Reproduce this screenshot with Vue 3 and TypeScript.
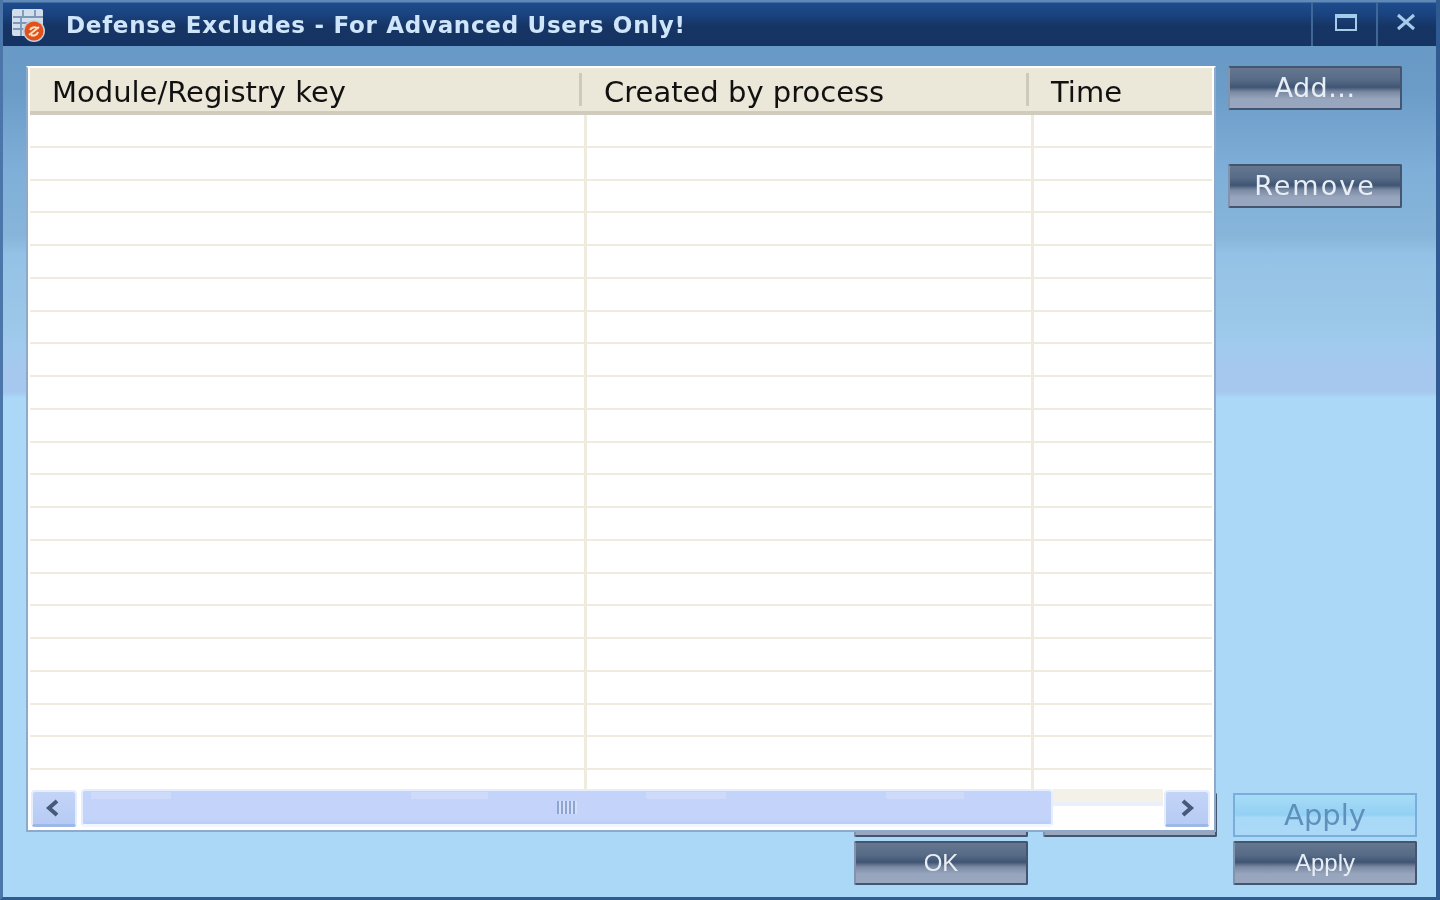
<template>
  <div class="window">
    <header class="titlebar">
      <svg class="app-icon" width="38" height="34" viewBox="0 0 38 34">
        <rect x="1" y="1" width="31" height="27" rx="2" fill="#d3deeb" />
        <path d="M2 9H32M2 15H20M2 21H14M12 2V9M24 2V9M10 9V28" stroke="#7d97b8" stroke-width="1.8" fill="none" />
        <circle cx="23" cy="23" r="11" fill="#c3cfdd" />
        <circle cx="23" cy="23" r="9.5" fill="#e4501a" />
        <path d="M18 27L28 19M19 22a5 5 0 0 1 7-2M27 24a5 5 0 0 1-7 3" stroke="#fbe3c8" stroke-width="2" fill="none" />
      </svg>
      <span class="title">Defense Excludes - For Advanced Users Only!</span>
      <div class="caption-btn max">
        <svg width="24" height="18" viewBox="0 0 24 18">
          <rect x="2" y="2" width="20" height="15" fill="none" stroke="#a5cdea" stroke-width="2" />
          <path d="M2 3.5H22" stroke="#a5cdea" stroke-width="3" />
        </svg>
      </div>
      <div class="caption-btn close">
        <svg width="22" height="18" viewBox="0 0 22 18">
          <path d="M3 2L19 16M19 2L3 16" stroke="#a5cdea" stroke-width="3" fill="none" />
        </svg>
      </div>
    </header>

    <main class="body">
      <section class="left">
        <button class="btn hidden-ok" />
        <button class="btn hidden-cancel" />
        <div class="panel">
          <div class="head">
            <div v-for="col in columns" :key="col" class="head-cell">{{ col }}</div>
          </div>
          <div class="rows">
            <div v-for="n in 21" :key="n" class="row">
              <div class="cell" />
              <div class="cell" />
              <div class="cell" />
            </div>
          </div>
          <div class="scrollbar">
            <div class="arrow prev">
              <svg width="16" height="18" viewBox="0 0 16 18"><path d="M12 2L4 9L12 16" fill="none" stroke="#47597a" stroke-width="4" /></svg>
            </div>
            <div class="thumb">
              <span class="grip" />
            </div>
            <div class="track" />
            <div class="arrow">
              <svg width="16" height="18" viewBox="0 0 16 18"><path d="M4 2L12 9L4 16" fill="none" stroke="#47597a" stroke-width="4" /></svg>
            </div>
          </div>
        </div>
        <div class="ok-row">
          <button class="btn primary">OK</button>
        </div>
      </section>

      <aside class="side">
        <button class="btn add">Add...</button>
        <button class="btn remove">Remove</button>
        <button class="btn ghost">Apply</button>
        <button class="btn primary apply">Apply</button>
      </aside>
    </main>
  </div>
</template>

<script setup lang="ts">
const columns: string[] = ['Module/Registry key', 'Created by process', 'Time'];
</script>

<style>
html,
body {
  margin: 0;
  overflow: hidden;
}
</style>

<style scoped>
.window {
  width: 1440px;
  height: 900px;
  box-sizing: border-box;
  display: flex;
  flex-direction: column;
  overflow: hidden;
  font-family: "DejaVu Sans", Verdana, sans-serif;
  filter: blur(0.5px);
  border-left: 3px solid #4a76aa;
  border-right: 4px solid #2f5b92;
  border-bottom: 3px solid #2f5a92;
  background: linear-gradient(180deg, #6597c4 0, #6b9cc8 90px, #7fafd8 170px, #87b5da 235px, #94c2e6 255px, #9bc7e8 320px, #a0cbee 345px, #a6c8ee 370px, #a6c8ee 392px, #abd8f7 398px, #abd8f7 100%);
}

.titlebar {
  height: 46px;
  flex: none;
  display: flex;
  align-items: center;
  box-sizing: border-box;
  padding: 3px 0 0 11px;
  margin: 0 -4px 0 -3px;
  background: linear-gradient(180deg, #5f8ab8 0, #5f8ab8 2px, #1f4c8d 3px, #1a4380 14px, #163565 26px, #153363 100%);
}

.app-icon {
  flex: none;
}

.title {
  flex: 1;
  margin-left: 17px;
  color: #cfe6fa;
  font-size: 23px;
  font-weight: 700;
  letter-spacing: 0.72px;
  white-space: nowrap;
}

.caption-btn {
  height: 43px;
  flex: none;
  display: flex;
  align-items: center;
  justify-content: center;
  padding-bottom: 6px;
  box-sizing: border-box;
  border-left: 2px solid #3f6797;
}

.max {
  width: 65px;
  padding-left: 2px;
}

.close {
  width: 64px;
  padding-right: 6px;
}

.body {
  flex: 1;
  min-height: 0;
  display: flex;
  padding: 20px 0 0 23px;
}

.left {
  position: relative;
  width: 1190px;
  flex: none;
  display: flex;
  flex-direction: column;
}

.panel {
  position: relative;
  height: 766px;
  box-sizing: border-box;
  display: flex;
  flex-direction: column;
  background: #fff;
  border: 2px solid #8fa9cb;
  border-top-color: #fff;
  padding: 0 2px 2px 2px;
  overflow: hidden;
}

.head {
  height: 47px;
  flex: none;
  box-sizing: border-box;
  display: grid;
  grid-template-columns: 552px 447px 1fr;
  align-items: center;
  background: #ebe8d9;
  border-bottom: 4px solid #cfccbd;
}

.head-cell {
  height: 33px;
  display: flex;
  align-items: center;
  padding: 5px 0 0 22px;
  font-size: 29px;
  color: #111;
  white-space: nowrap;
  border-right: 3px solid #cdcabb;
  box-sizing: border-box;
}

.head-cell:last-child {
  border-right: none;
}

.rows {
  flex: 1;
  min-height: 0;
  overflow: hidden;
}

.row {
  height: 32.75px;
  box-sizing: border-box;
  display: grid;
  grid-template-columns: 557px 447px 1fr;
  border-bottom: 2px solid #efecdf;
}

.cell {
  border-right: 3px solid #efecdf;
}

.cell:last-child {
  border-right: none;
}

.scrollbar {
  position: absolute;
  left: 2px;
  right: 0;
  bottom: 0;
  height: 41px;
  display: flex;
  align-items: stretch;
  padding: 0 3px 3px 0;
  box-sizing: border-box;
  background: #fff;
}

.arrow {
  width: 46px;
  flex: none;
  margin: 1px 1px 0;
  display: flex;
  align-items: center;
  justify-content: center;
  box-sizing: border-box;
  border: 2px solid #e6eefb;
  border-bottom: 3px solid #9db7e6;
  border-radius: 4px;
  background: linear-gradient(180deg, #c3d4f7, #b6cbf4);
}

.prev {
  padding-right: 3px;
}

.thumb {
  width: 972px;
  flex: none;
  margin: 0 0 0 3px;
  display: flex;
  align-items: center;
  justify-content: center;
  box-sizing: border-box;
  border: 2px solid #e6eefb;
  border-bottom: 3px solid #f2f6ff;
  border-radius: 4px;
  background:
    linear-gradient(90deg, transparent 8px, #cedaf9 8px, #cedaf9 88px, transparent 88px, transparent 328px, #cedaf9 328px, #cedaf9 405px, transparent 405px, transparent 563px, #cedaf9 563px, #cedaf9 643px, transparent 643px, transparent 803px, #cedaf9 803px, #cedaf9 881px, transparent 881px) 0 1px / 100% 7px no-repeat,
    linear-gradient(180deg, #c3d3f9 0, #c3d3f9 85%, #b7cdf7 100%);
}

.grip {
  width: 20px;
  height: 13px;
  background: repeating-linear-gradient(90deg, #8ea5cf 0, #8ea5cf 2px, #d4e0fa 2px, #d4e0fa 4px);
}

.track {
  flex: 1;
  background: linear-gradient(180deg, #f4f1e8 0, #f4f1e8 34%, #e9f0fb 34%, #e9f0fb 44%, #fff 44%);
}

.ok-row {
  margin-top: 9px;
  padding-left: 828px;
}

.btn {
  width: 174px;
  height: 44px;
  flex: none;
  display: block;
  padding: 0;
  box-sizing: border-box;
  font-family: "DejaVu Sans", Verdana, sans-serif;
  font-size: 27px;
  line-height: 34px;
  color: #e8eef5;
  border: 2px solid #44566f;
  border-radius: 2px;
  border-left-color: #8294ad;
  background: linear-gradient(180deg, #66778f 0, #566b87 30%, #3f5573 48%, #7b8aa3 60%, #97a5bd 78%, #98a6bf 100%);
}

.add {
  letter-spacing: 0.5px;
}

.primary {
  font-family: "Liberation Sans", Arial, sans-serif;
  font-size: 24px;
  line-height: 40px;
}

.hidden-ok,
.hidden-cancel {
  position: absolute;
  top: 727px;
}

.hidden-ok {
  left: 828px;
}

.hidden-cancel {
  left: 1017px;
}

.side {
  flex: 1;
  display: flex;
  flex-direction: column;
  padding-left: 12px;
}

.remove {
  margin-top: 54px;
  letter-spacing: 2px;
}

.ghost {
  width: 184px;
  margin: auto 0 4px 5px;
  color: #5f8fbb;
  font-size: 29px;
  line-height: 40px;
  border: 2px solid #79aedb;
  border-radius: 0;
  background: linear-gradient(180deg, #a7dcf7 0, #93d0f3 50%, #a8d9f6 56%, #abd8f7 100%);
}

.apply {
  width: 184px;
  margin: 0 0 12px 5px;
}
</style>
